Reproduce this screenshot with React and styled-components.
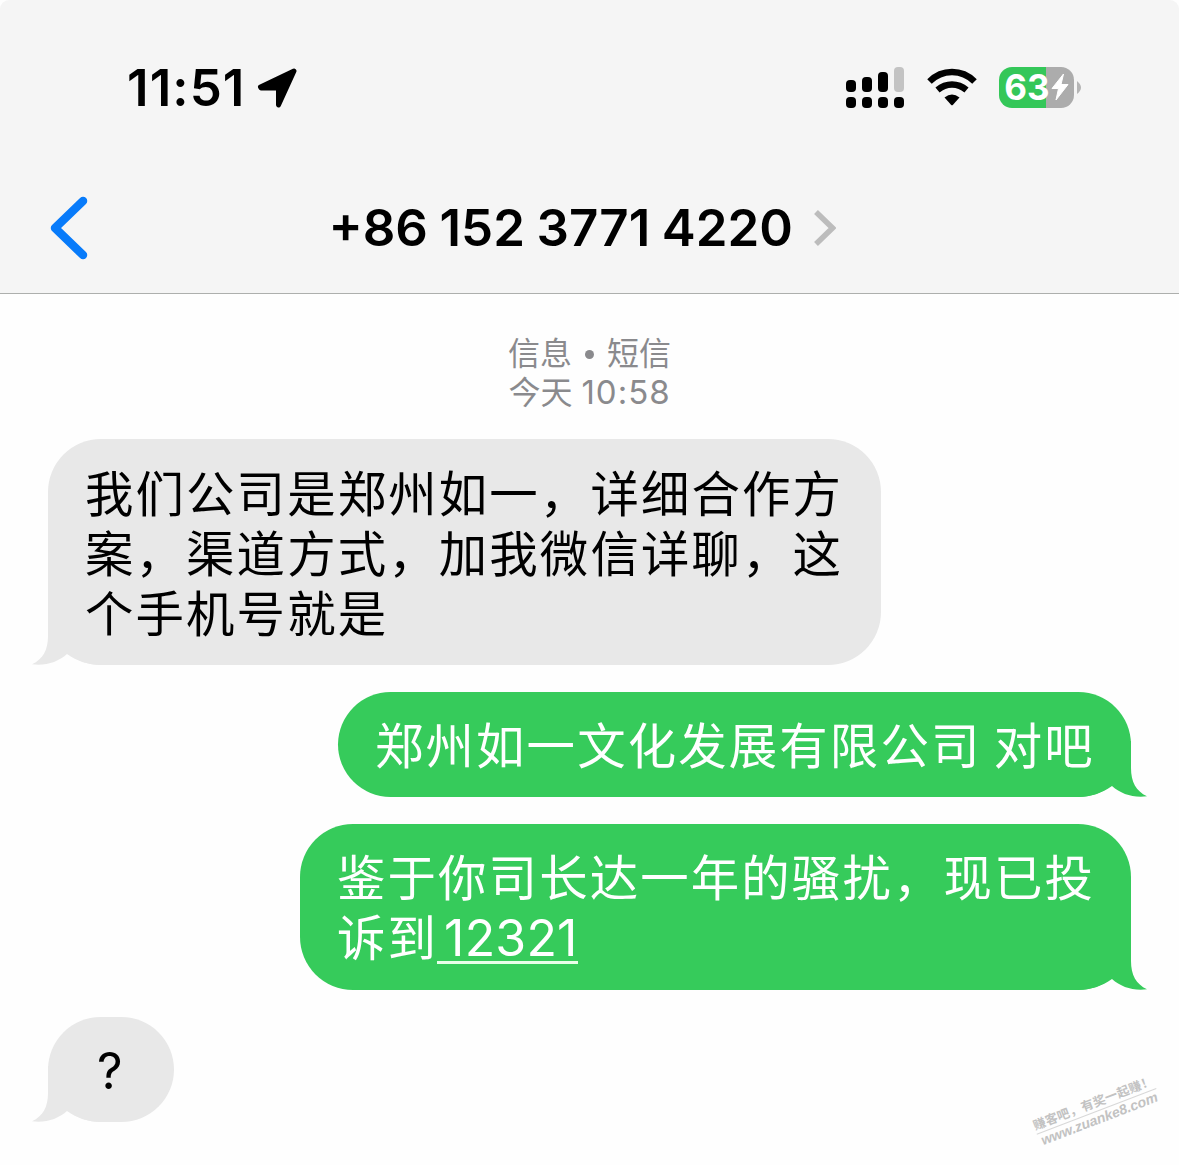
import React from 'react';
import styled, { createGlobalStyle } from 'styled-components';

const GlobalStyle = createGlobalStyle`
  body {
    margin: 0;
    background: #fefefe;
    font-family: Inter, "Noto Sans CJK SC", sans-serif;
  }
`;

const Screen = styled.main`
  width: 1179px;
  height: 1165px;
  overflow: hidden;
  position: relative;
  display: flex;
  flex-direction: column;
  background: #fefefe;
`;

const Header = styled.header`
  box-sizing: border-box;
  height: 294px;
  flex: none;
  background: #f5f5f5;
  border-bottom: 1px solid #adafad;
  border-radius: 9px 9px 0 0;
`;

const StatusBar = styled.div`
  height: 176px;
  box-sizing: border-box;
  padding: 0 98px 0 127px;
  display: flex;
  align-items: center;
  justify-content: space-between;
`;

const Clock = styled.div`
  display: flex;
  align-items: center;
  gap: 11px;
  font-size: 51px;
  font-weight: 600;
  line-height: 60px;
  letter-spacing: 1.1px;
  color: #000;
`;

const Indicators = styled.div`
  display: flex;
  align-items: center;
  padding-bottom: 2px;
`;

const Battery = styled.div`
  width: 75px;
  height: 41px;
  margin-left: 22px;
  border-radius: 13px;
  display: flex;
  align-items: center;
  justify-content: center;
  gap: 1px;
  background: linear-gradient(90deg, #34c759 0 ${(p) => p.$level}%, #acacac ${(p) => p.$level}% 100%);
  color: #fff;
  font-size: 35px;
  font-weight: 700;
  line-height: 41px;
`;

const TitleBar = styled.div`
  height: 103px;
  padding: 0 343px 0 50px;
  display: flex;
  align-items: center;
  justify-content: space-between;
`;

const Contact = styled.div`
  display: flex;
  align-items: center;
  gap: 20px;
`;

const Phone = styled.h1`
  margin: 0;
  font-size: 51px;
  font-weight: 600;
  line-height: 60px;
  letter-spacing: 0;
  word-spacing: -1.3px;
  white-space: nowrap;
  color: #000;
`;

const Stamp = styled.div`
  margin-top: 40px;
  height: 78px;
  text-align: center;
  font-size: 32px;
  line-height: 39px;
  color: #8a8a8d;
`;

const Dot = styled.span`
  display: inline-block;
  width: 9px;
  height: 9px;
  margin: 0 13px 6px;
  border-radius: 50%;
  background: currentColor;
`;

const Time = styled.span`
  font-size: 33px;
  letter-spacing: 1px;
`;

const Thread = styled.section`
  margin-top: 27px;
  padding: 0 48px;
  display: flex;
  flex-direction: column;
  gap: 27px;
`;

const Bubble = styled.div`
  position: relative;
  isolation: isolate;
  box-sizing: border-box;
  width: ${(p) => p.$width}px;
  align-self: ${(p) => (p.$sent ? 'flex-end' : 'flex-start')};
  padding: ${(p) => p.$top}px 0 ${(p) => p.$bottom}px 37px;
  border-radius: 53px;
  background: ${(p) => (p.$sent ? '#36cb5b' : '#e8e8e8')};
  color: ${(p) => (p.$sent ? '#fff' : '#000')};
  font-size: 48.4px;
  line-height: 60px;
  letter-spacing: 2.15px;
  word-spacing: -3.5px;
  white-space: nowrap;
`;

const TailShape = styled.svg`
  position: absolute;
  z-index: -1;
  bottom: 0;
  ${(p) => (p.$sent ? 'right: -16px;' : 'left: -16px; transform: scaleX(-1);')}
`;

const NumberLink = styled.span`
  display: inline-block;
  height: 55px;
  box-sizing: border-box;
  margin-left: -1px;
  padding-left: 7px;
  border-bottom: 3px solid #e8ffe9;
  font-size: 50px;
  line-height: 58px;
  letter-spacing: 0.2px;
  vertical-align: top;
`;

const Question = styled.span`
  display: inline-block;
  padding-left: 12px;
  font-size: 50px;
`;

const Watermark = styled.div`
  position: absolute;
  left: 1032px;
  top: 1093px;
  width: 128px;
  transform: rotate(-21deg);
  color: #c2c2c2;
  font-weight: 700;
  text-align: center;
  white-space: nowrap;
`;

const WatermarkName = styled.div`
  font-family: "Noto Sans CJK SC", sans-serif;
  font-size: 12.5px;
  line-height: 18px;
  letter-spacing: 0.3px;
  border-bottom: 1px solid #d8d8d8;
`;

const WatermarkSite = styled.div`
  font-family: "Liberation Sans", sans-serif;
  font-size: 14px;
  font-style: italic;
  line-height: 15px;
`;

function Tail({ sent }) {
  return (
    <TailShape $sent={sent} width="70" height="56" viewBox="0 0 70 56">
      <path
        d="M0 56 C14 56 25 52 35 45 C44 53 56 57 70 55.3 C59 50 54 41 54 27 L54 0 L0 0 Z"
        fill={sent ? '#36cb5b' : '#e8e8e8'}
      />
    </TailShape>
  );
}

function Message({ sent, width, top = 25, bottom = 20, lines, children }) {
  return (
    <Bubble $sent={sent} $width={width} $top={top} $bottom={bottom}>
      <Tail sent={sent} />
      {lines && lines.map((line) => <div key={line}>{line}</div>)}
      {children}
    </Bubble>
  );
}

function LocationIcon() {
  return (
    <svg width="40" height="40" viewBox="0 0 40 40">
      <path d="M3.500 19 L37 3 L21.500 37 V20 H4 Z" stroke="#000" strokeWidth="5" strokeLinejoin="round" />
    </svg>
  );
}

function SignalIcon() {
  const columns = [
    { x: 0, y: 13, h: 12 },
    { x: 16, y: 10, h: 15 },
    { x: 32, y: 5, h: 20 },
  ];
  return (
    <svg width="58" height="41" viewBox="0 0 58 41">
      {columns.map((c) => (
        <rect key={c.x} x={c.x} y={c.y} width="10" height={c.h} rx="4" />
      ))}
      <rect x="48" width="10" height="25" rx="4" fill="#c3c3c3" />
      {[0, 16, 32, 48].map((x) => (
        <rect key={x} x={x} y="30" width="10" height="11" rx="4" />
      ))}
    </svg>
  );
}

const WifiSvg = styled.svg`
  margin-left: 23px;
`;

function WifiIcon() {
  return (
    <WifiSvg width="50" height="38" viewBox="0 0 50 38">
      <g fill="none" stroke="#000" strokeWidth="6.400">
        <path d="M2.500 13.500 Q12 4 25 4 Q38 4 47.500 13.500" />
        <path d="M10.500 22 Q17 16.500 25 16.500 Q33 16.500 39.500 22" />
      </g>
      <path d="M17.500 29.500 Q25 23.500 32.500 29.500 L26 36.700 Q25 37.700 24 36.700 Z" />
    </WifiSvg>
  );
}

export default function App() {
  return (
    <Screen>
      <GlobalStyle />
      <Header>
        <StatusBar>
          <Clock>
            11:51
            <LocationIcon />
          </Clock>
          <Indicators>
            <SignalIcon />
            <WifiIcon />
            <Battery $level={63}>
              63
              <svg width="18" height="28" viewBox="0 0 18 28">
                <path d="M12.500 1 L1 15.500 H7.500 L5 27 L17 11.500 H10 Z" fill="#fff" stroke="#fff" strokeLinejoin="round" />
              </svg>
            </Battery>
            <svg width="7" height="13" viewBox="0 0 7 13">
              <path d="M3 0 Q11 6.500 3 13 Z" fill="#b5b5b5" />
            </svg>
          </Indicators>
        </StatusBar>
        <TitleBar>
          <svg width="38" height="64" viewBox="0 0 38 64">
            <path d="M33 5 L5 32 L33 59" fill="none" stroke="#087bfa" strokeWidth="8.500" strokeLinecap="round" strokeLinejoin="round" />
          </svg>
          <Contact>
            <Phone>+86 152 3771 4220</Phone>
            <svg width="23" height="38" viewBox="0 0 23 38">
              <path d="M3 3 L19.500 19 L3 35" fill="none" stroke="#bcbcbc" strokeWidth="5.500" />
            </svg>
          </Contact>
        </TitleBar>
      </Header>
      <Stamp>
        <div>信息<Dot />短信</div>
        <div>今天 <Time>10:58</Time></div>
      </Stamp>
      <Thread>
        <Message
          width={833}
          top={26}
          lines={['我们公司是郑州如一，详细合作方', '案，渠道方式，加我微信详聊，这', '个手机号就是']}
        />
        <Message sent width={793} lines={['郑州如一文化发展有限公司 对吧']} />
        <Message sent width={831} bottom={21} lines={['鉴于你司长达一年的骚扰，现已投']}>
          <div>
            诉到<NumberLink>12321</NumberLink>
          </div>
        </Message>
        <Message width={126} top={24}>
          <Question>?</Question>
        </Message>
      </Thread>
      <Watermark>
        <WatermarkName>赚客吧，有奖一起赚！</WatermarkName>
        <WatermarkSite>www.zuanke8.com</WatermarkSite>
      </Watermark>
    </Screen>
  );
}
